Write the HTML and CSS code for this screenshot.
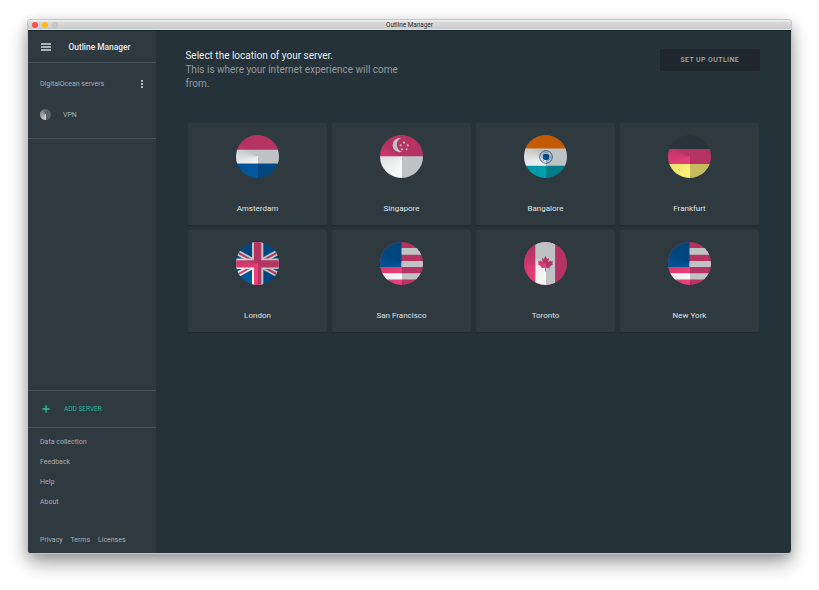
FILE: index.html
```html
<!DOCTYPE html>
<html lang="en">
<head>
<meta charset="utf-8">
<title>Outline Manager</title>
<link rel="stylesheet" href="styles.css">
</head>
<body>
<div class="window">
  <header class="titlebar">
    <div class="lights"><i class="close"></i><i class="minimize"></i><i class="zoom"></i></div>
    <span class="title">Outline Manager</span>
  </header>
  <div class="body">
    <aside class="sidebar">
      <div class="brand">
        <svg class="menu" viewBox="0 0 10 8"><path d="M0 1h10M0 4h10M0 7h10"/></svg>
        <span>Outline Manager</span>
      </div>
      <section class="servers">
        <div class="provider"><span>DigitalOcean servers</span>
          <svg class="dots" viewBox="0 0 2 8"><path d="M0 0h2v2H0zM0 3h2v2H0zM0 6h2v2H0z"/></svg>
        </div>
        <div class="server"><i class="server-icon"></i><span>VPN</span></div>
      </section>
      <div class="add">
        <svg class="plus" viewBox="0 0 8 8"><path d="M4 .3v7.4M.3 4h7.4"/></svg>
        <span>ADD SERVER</span>
      </div>
      <nav class="links"><a>Data collection</a><a>Feedback</a><a>Help</a><a>About</a></nav>
      <footer class="legal"><a>Privacy</a><a>Terms</a><a>Licenses</a></footer>
    </aside>
    <main class="main">
      <div class="intro">
        <div class="heading"><h1>Select the location of your server.</h1><p>This is where your internet experience will come from.</p></div>
        <button class="setup">SET UP OUTLINE</button>
      </div>
      <div class="grid">
        <div class="card"><div class="flag"><svg viewBox="0 0 43 43"><path fill="#ec407a" d="M0 0h43v15H0z"/><path fill="#f8fafa" d="M0 14.7h43v14H0z"/><path fill="#0059a0" d="M0 28.7h43V43H0z"/></svg></div><span>Amsterdam</span></div>
        <div class="card"><div class="flag"><svg viewBox="0 0 43 43"><path fill="#ec407a" d="M0 0h43v22H0z"/><path fill="#f8fafa" d="M0 21.2h43V43H0z"/><path fill="#f8fafa" d="M21 3.3a7 7 0 1 0 1 13.4A7.2 7.2 0 0 1 21 3.3z"/><g fill="#f8fafa"><circle cx="24" cy="7.7" r="1.1"/><circle cx="20.6" cy="10.3" r="1.1"/><circle cx="27.7" cy="10.3" r="1.1"/><circle cx="22" cy="14.3" r="1.1"/><circle cx="26.5" cy="14.3" r="1.1"/></g></svg></div><span>Singapore</span></div>
        <div class="card"><div class="flag"><svg viewBox="0 0 43 43"><path fill="#ff7300" d="M0 0h43v14H0z"/><path fill="#f8fafa" d="M0 13.4h43v18H0z"/><path fill="#00a0ad" d="M0 30.7h43V43H0z"/><circle cx="22" cy="22" r="6.3" fill="none" stroke="#0059a0" stroke-width=".8"/><circle cx="22" cy="22" r="4.4" fill="none" stroke="#0059a0" stroke-width=".5" stroke-dasharray=".7 .5"/><circle cx="22" cy="22" r="3.3" fill="#0059a0"/></svg></div><span>Bangalore</span></div>
        <div class="card"><div class="flag"><svg viewBox="0 0 43 43"><path fill="#354048" d="M0 0h43v15H0z"/><path fill="#ec407a" d="M0 14h43v16H0z"/><path fill="#fff176" d="M0 29h43v14H0z"/></svg></div><span>Frankfurt</span></div>
        <div class="card"><div class="flag"><svg viewBox="0 0 43 43"><path fill="#0059a0" d="M0 0h43v43H0z"/><path stroke="#f8fafa" stroke-width="5.4" d="M-1 9l45 25M-1 34L44 9"/><path stroke="#ec407a" stroke-width="1.9" d="M-1 9l45 25M-1 34L44 9"/><path fill="#f8fafa" d="M16 0h11.3v43H16zM0 16.5h43v10.5H0z"/><path fill="#ec407a" d="M18 0h7.3v43H18zM0 18.2h43v7.2H0z"/></svg></div><span>London</span></div>
        <div class="card"><div class="flag"><svg viewBox="0 0 43 43"><path fill="#ec407a" d="M0 0h43v43H0z"/><path fill="#f8fafa" d="M21 6h22v6.7H21zM21 18.9h22V25H21zM0 31.2h43v6.4H0z"/><path fill="#0059a0" d="M0 0h21.5v25H0z"/></svg></div><span>San Francisco</span></div>
        <div class="card"><div class="flag"><svg viewBox="0 0 43 43"><path fill="#ec407a" d="M0 0h43v43H0z"/><path fill="#f8fafa" d="M11.3 0h19.8v43H11.3z"/><path fill="#ec407a" d="M21.5 14l1.7 3 1.8-.9-.7 4.3 2.1-2.1.4 1.2 2.2-.3-.8 2.2.9.6-3.7 3 .4 1.3-3.9-.5.1 3.8h-1l.1-3.8-3.9.5.4-1.3-3.7-3 .9-.6-.8-2.2 2.2.3.4-1.2 2.1 2.1-.7-4.3 1.8.9z"/></svg></div><span>Toronto</span></div>
        <div class="card"><div class="flag"><svg viewBox="0 0 43 43"><path fill="#ec407a" d="M0 0h43v43H0z"/><path fill="#f8fafa" d="M21 6h22v6.7H21zM21 18.9h22V25H21zM0 31.2h43v6.4H0z"/><path fill="#0059a0" d="M0 0h21.5v25H0z"/></svg></div><span>New York</span></div>
      </div>
    </main>
  </div>
</div>
</body>
</html>
```
FILE: styles.css
```css
* { box-sizing: border-box; }
body { margin: 0; background: #fff; font-family: Roboto, sans-serif; height: 590px; overflow: hidden; padding: 20px 28px; }
.window { width: 763px; height: 533px; border-radius: 3px; overflow: hidden; display: flex; flex-direction: column; box-shadow: 0 0 0 1px #c4c6c7, 0 9px 19px rgba(0,0,0,.4), 0 2px 12px rgba(0,0,0,.12); }
.titlebar { height: 11px; flex: none; display: grid; grid-template-columns: 1fr auto 1fr; align-items: center; background: linear-gradient(#f4f4f4, #d8d8d8 25%, #cbcbcb 85%, #f0f0f0); border-bottom: 1px solid #15252c; font-size: 6.4px; line-height: 10px; color: #2b2b2b; }
.title { padding-top: 1px; line-height: 9px; }
.lights { display: flex; gap: 4px; padding-left: 4px; }
.lights i { width: 6px; height: 6px; border-radius: 50%; }
.close { background: #fc4f4c; }
.minimize { background: #fdbc18; }
.zoom { background: #c9c9c9; border: 1px solid #bdbdbd; }
.body { flex: 1; display: flex; min-height: 0; background: #263239; }
.sidebar { width: 128px; flex: none; background: #2f3a40; display: flex; flex-direction: column; font-size: 7px; line-height: 10px; color: #a9afb2; }
.brand { height: 32px; flex: none; display: flex; align-items: center; padding-left: 13px; border-bottom: 1px solid #465157; font-size: 8.4px; font-weight: 500; color: #e8eaeb; }
.menu { width: 10px; height: 8px; margin-right: 17.5px; stroke: #d8dbdc; stroke-width: 1.4; }
.servers { height: 76px; flex: none; border-bottom: 1px solid #465157; padding: 15.6px 12px 0; }
.provider { display: flex; justify-content: space-between; align-items: center; height: 10px; }
.dots { width: 2px; height: 8px; fill: #b3b8ba; margin-right: 1px; }
.server { display: flex; align-items: center; height: 12px; margin-top: 20px; }
.server-icon { width: 11px; height: 11px; border-radius: 50%; margin-right: 12px; background: conic-gradient(from 180deg, #c4c9cb, #7e868a 40%, #596267 50%, #596267); }
.add { margin-top: auto; height: 38px; flex: none; display: flex; align-items: center; padding-left: 14px; border-top: 1px solid #465157; border-bottom: 1px solid #465157; color: #22b795; font-size: 6.5px; }
.plus { width: 8px; height: 8px; stroke: #22c09b; stroke-width: 1.4; margin-right: 14px; }
.links { display: flex; flex-direction: column; gap: 10px; padding: 9px 12px 0; height: 107px; flex: none; }
.legal { display: flex; gap: 7.8px; padding: 0 12px; height: 18px; flex: none; }
.main { flex: 1; padding: 18px 31px 0 32px; }
.intro { display: flex; justify-content: space-between; align-items: flex-start; height: 74px; margin-left: -2.6px; }
.heading { width: 230px; font-size: 10px; line-height: 14px; color: #919a9e; }
h1, p { margin: 0; font-size: inherit; font-weight: 400; }
h1 { color: #e8eaeb; }
.setup { width: 100.4px; height: 22px; margin: -.4px 0 0; padding: 0; border: 0; border-radius: 1px; background: #1e272d; color: #a4a9ac; font: 500 7px/22px Roboto, sans-serif; letter-spacing: .4px; }
.grid { display: grid; grid-template-columns: repeat(4, 139px); grid-auto-rows: 102px; gap: 5px; }
.card { display: flex; flex-direction: column; align-items: center; padding-top: 12px; border-radius: 2px; background: #2f3a40; box-shadow: 0 1px 1px rgba(0,0,0,.2), 0 0 0 .5px #2b363c; color: #dfe2e3; font-size: 8px; line-height: 10px; }
.flag { display: grid; width: 43px; height: 43px; margin-bottom: 26px; border-radius: 50%; overflow: hidden; }
.flag svg, .flag::after { grid-area: 1 / 1; width: 43px; height: 43px; }
.flag::after { content: ""; background: conic-gradient(from 180deg, transparent, rgba(0,10,16,.07) 20%, rgba(0,10,16,.23) 35%, rgba(0,10,16,.23)); }
```
